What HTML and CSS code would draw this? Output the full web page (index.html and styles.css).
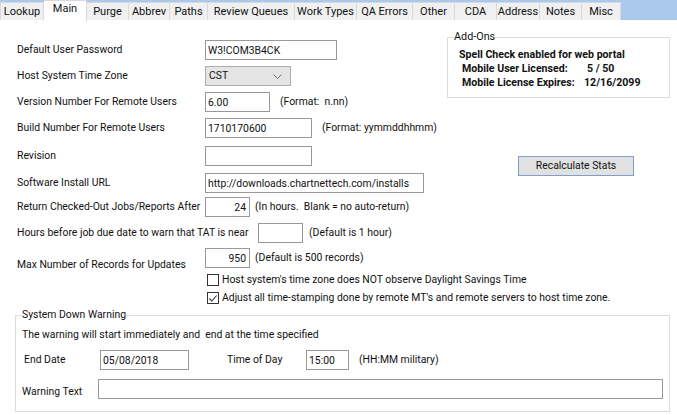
FILE: index.html
```html
<!DOCTYPE html>
<html>
<head>
<meta charset="utf-8">
<title>Main</title>
<link rel="stylesheet" href="styles.css">
</head>
<body>
<nav class="tabs">
  <span class="tab">Lookup</span>
  <span class="tab active">Main</span>
  <span class="tab">Purge</span>
  <span class="tab">Abbrev</span>
  <span class="tab">Paths</span>
  <span class="tab">Review Queues</span>
  <span class="tab">Work Types</span>
  <span class="tab">QA Errors</span>
  <span class="tab">Other</span>
  <span class="tab">CDA</span>
  <span class="tab">Address</span>
  <span class="tab">Notes</span>
  <span class="tab">Misc</span>
</nav>
<main class="content">
  <div class="top">
    <div class="form">
      <div class="row"><span class="label">Default User Password</span><input class="field w-pass" value="W3!COM3B4CK"></div>
      <div class="row"><span class="label">Host System Time Zone</span>
        <div class="select"><span>CST</span>
          <svg class="chev" width="9" height="5" viewBox="0 0 9 5"><polyline points="0.5,0.5 4.5,4.5 8.5,0.5" fill="none" stroke="#6b6b6b" stroke-width="1"/></svg>
        </div>
      </div>
      <div class="row"><span class="label">Version Number For Remote Users</span><input class="field w-ver" value="6.00"><span class="note">(Format:&nbsp; n.nn)</span></div>
      <div class="row spaced"><span class="label">Build Number For Remote Users</span><input class="field w-build" value="1710170600"><span class="note">(Format: yymmddhhmm)</span></div>
      <div class="row spaced-sm"><span class="label">Revision</span><input class="field w-build" value=""></div>
      <div class="row"><span class="label">Software Install URL</span><input class="field w-url" value="http://downloads.chartnettech.com/installs"></div>
    </div>
    <aside class="side">
      <fieldset class="group addons">
        <legend>Add-Ons</legend>
        <div class="spell">Spell Check enabled for web portal</div>
        <div class="lic">
          <span>Mobile User Licensed:</span><span class="count">5 / 50</span>
          <span>Mobile License Expires:</span><span>12/16/2099</span>
        </div>
      </fieldset>
      <button class="btn">Recalculate Stats</button>
    </aside>
  </div>
  <div class="lower">
    <div class="row"><span class="label">Return Checked-Out Jobs/Reports After</span><input class="field w-num num" value="24"><span class="note near">(In hours.&nbsp; Blank = no auto-return)</span></div>
    <div class="row tight"><span class="label wide">Hours before job due date to warn that TAT is near</span><input class="field w-num" value=""><span class="note mid">(Default is 1 hour)</span></div>
    <div class="row"><span class="label low">Max Number of Records for Updates</span><input class="field w-num num" value="950"><span class="note near">(Default is 500 records)</span></div>
    <div class="check"><span class="box"></span><span>Host system's time zone does NOT observe Daylight Savings Time</span></div>
    <div class="check"><span class="box"><svg width="11" height="11" viewBox="0 0 11 11"><polyline points="1.5,5.5 4.2,8.3 9.5,2.2" fill="none" stroke="#333" stroke-width="1.2"/></svg></span><span>Adjust all time-stamping done by remote MT's and remote servers to host time zone.</span></div>
  </div>
  <fieldset class="group warn">
    <legend>System Down Warning</legend>
    <div class="intro">The warning will start immediately and&nbsp; end at the time specified</div>
    <div class="wrow">
      <span class="wlabel indent">End Date</span><input class="field w-date" value="05/08/2018">
      <span class="tlabel">Time of Day</span><input class="field w-time" value="15:00">
      <span class="note">(HH:MM military)</span>
    </div>
    <div class="wrow text-row">
      <span class="wlabel lowered">Warning Text</span><input class="field w-fill" value="">
    </div>
  </fieldset>
</main>
</body>
</html>
```
FILE: styles.css
```css
* { box-sizing: border-box; }
html, body { margin: 0; padding: 0; background: #fff; }
body {
  font-family: "Roboto", "Open Sans", sans-serif;
  font-size: 10.4px;
  line-height: 14px;
  color: #111;
  width: 677px;
  height: 415px;
  overflow: hidden;
}

/* tabs */
.tabs {
  display: flex;
  align-items: flex-start;
  height: 20px;
  background: #abc8ed;
  font-size: 11px;
}
.tab {
  height: 18px;
  margin-top: 2px;
  background: #f0f0f0;
  border: 1px solid #d9d9d9;
  border-left: none;
  border-bottom: none;
  text-align: center;
  line-height: 17px;
  white-space: nowrap;
}
.tab:first-child { border-left: 1px solid #d9d9d9; }
.tab.active {
  height: 21px;
  margin-top: 0;
  background: #fff;
  line-height: 16px;
}
.tab:nth-child(1) { width: 44px; }
.tab:nth-child(2) { width: 43px; }
.tab:nth-child(3) { width: 42px; }
.tab:nth-child(4) { width: 41px; }
.tab:nth-child(5) { width: 38px; }
.tab:nth-child(6) { width: 87px; }
.tab:nth-child(7) { width: 62px; }
.tab:nth-child(8) { width: 56px; }
.tab:nth-child(9) { width: 42px; }
.tab:nth-child(10) { width: 42px; }
.tab:nth-child(11) { width: 43px; }
.tab:nth-child(12) { width: 42px; }
.tab:nth-child(13) { width: 39px; }

/* content */
.content { padding: 0 7px 0 15px; }
.top { display: flex; }
.form { padding-top: 20px; padding-left: 2px; width: 420px; }
.row {
  display: flex;
  align-items: center;
  height: 20px;
  margin-bottom: 6px;
  white-space: nowrap;
}
.row.spaced { margin-bottom: 8px; }
.row.spaced-sm { margin-bottom: 7px; }
.row.tight { margin-bottom: 5px; }
.form .row:last-child { margin-bottom: 0; }
.label { width: 188px; flex: none; }
.label.wide { width: 241px; }
.label.low { align-self: flex-end; margin-bottom: -5px; line-height: 16px; }

.field {
  height: 20px;
  border: 1px solid #999;
  background: #fff;
  padding: 0 2px;
  font: inherit;
  color: #111;
  outline: none;
  margin: 0;
  flex: none;
}
.field.num { text-align: right; padding-right: 3px; }
.w-pass { width: 132px; }
.w-ver { width: 65px; }
.w-build { width: 107px; }
.w-url { width: 219px; }
.w-num { width: 45px; }
.w-date { width: 89px; }
.w-time { width: 43px; }
.w-fill { flex: 1; }

.note { margin-left: 10px; }
.note.near { margin-left: 5px; }
.note.mid { margin-left: 6px; }

.select {
  width: 86px;
  height: 20px;
  background: #e5e5e5;
  border: 1px solid #adadad;
  display: flex;
  align-items: center;
  justify-content: space-between;
  padding: 0 8px 0 3px;
}
.chev { display: block; }

/* right side */
.side {
  margin-left: auto;
  width: 223px;
  flex: none;
}
.group {
  border: 1px solid #dcdcdc;
  margin: 0;
  min-width: 0;
}
.group legend {
  padding: 0;
  line-height: 14px;
}
.addons {
  margin-top: 10px;
  padding: 4px 4px 7px 11px;
}
.addons legend { margin-left: -5px; font-size: 10.8px; }
.spell, .lic { font-weight: 700; font-size: 10.6px; white-space: nowrap; }
.lic {
  display: grid;
  grid-template-columns: 122px auto;
  margin-left: 3px;
}
.lic .count { padding-left: 3px; }

.btn {
  display: block;
  margin: 58px 0 0 71px;
  width: 116px;
  height: 20px;
  background: #e1e1e1;
  border: 1px solid #7f9fc9;
  font: inherit;
  color: #111;
  padding: 0;
}

/* lower */
.lower { padding-left: 2px; margin-top: 4px; }
.lower .row:nth-child(3) { margin-bottom: 0; }
.check {
  display: flex;
  align-items: center;
  height: 18px;
  padding-left: 190px;
  white-space: nowrap;
}
.lower .row + .check { margin-top: 3px; }
.box {
  width: 12px;
  height: 12px;
  border: 1px solid #333;
  background: #fff;
  margin-right: 3px;
  display: flex;
  align-items: center;
  justify-content: center;
  flex: none;
}
.box svg { display: block; }

.warn {
  margin-top: 1px;
  padding: 6px 6px 12px 6px;
}
.intro { white-space: nowrap; }
.wrow {
  display: flex;
  align-items: center;
  height: 20px;
  margin-top: 8px;
  white-space: nowrap;
}
.wrow.text-row { margin-top: 9px; }
.wlabel { width: 76px; flex: none; }
.wlabel.indent { padding-left: 2px; width: 78px; }
.wlabel.lowered { margin-top: 5px; }
.tlabel { margin-left: 38px; width: 79px; flex: none; }
```
